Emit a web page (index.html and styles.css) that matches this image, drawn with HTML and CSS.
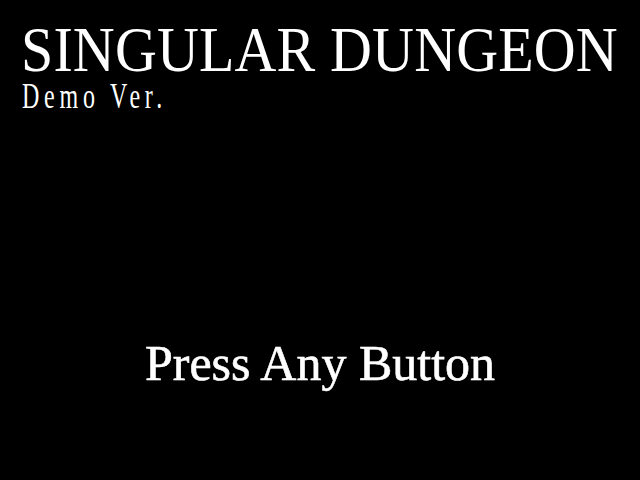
FILE: index.html
```html
<!DOCTYPE html>
<html>
<head>
<meta charset="utf-8">
<link rel="stylesheet" href="styles.css">
</head>
<body>
<div class="screen">
  <header class="heading">
    <h1 class="title">SINGULAR DUNGEON</h1>
    <div class="subtitle">Demo Ver.</div>
  </header>
  <main class="prompt">Press Any Button</main>
</div>
</body>
</html>
```
FILE: styles.css
```css
html, body {
  margin: 0;
  padding: 0;
  background: #000;
}
.screen {
  width: 640px;
  height: 480px;
  background: #000;
  color: #fff;
  display: flex;
  flex-direction: column;
  overflow: hidden;
}
.heading {
  padding: 28px 0 0 22px;
  display: flex;
  flex-direction: column;
}
.title {
  margin: 0 0 0 -1px;
  font-family: "Liberation Serif", serif;
  font-weight: normal;
  font-size: 58px;
  line-height: 48px;
  height: 48px;
  letter-spacing: 0.15px;
  white-space: nowrap;
  transform: scaleY(1.094);
  transform-origin: 0 43.6px;
}
.subtitle {
  margin-top: 14px;
  font-family: "Liberation Serif", serif;
  font-size: 24px;
  line-height: 20px;
  height: 20px;
  letter-spacing: 4.75px;
  white-space: nowrap;
  transform: scaleY(1.45);
  transform-origin: 0 18.1px;
}
.prompt {
  margin-top: 228px;
  text-align: center;
  font-family: "Liberation Serif", serif;
  font-size: 50px;
  line-height: 50px;
  -webkit-text-stroke: 0.6px #fff;
}
```
